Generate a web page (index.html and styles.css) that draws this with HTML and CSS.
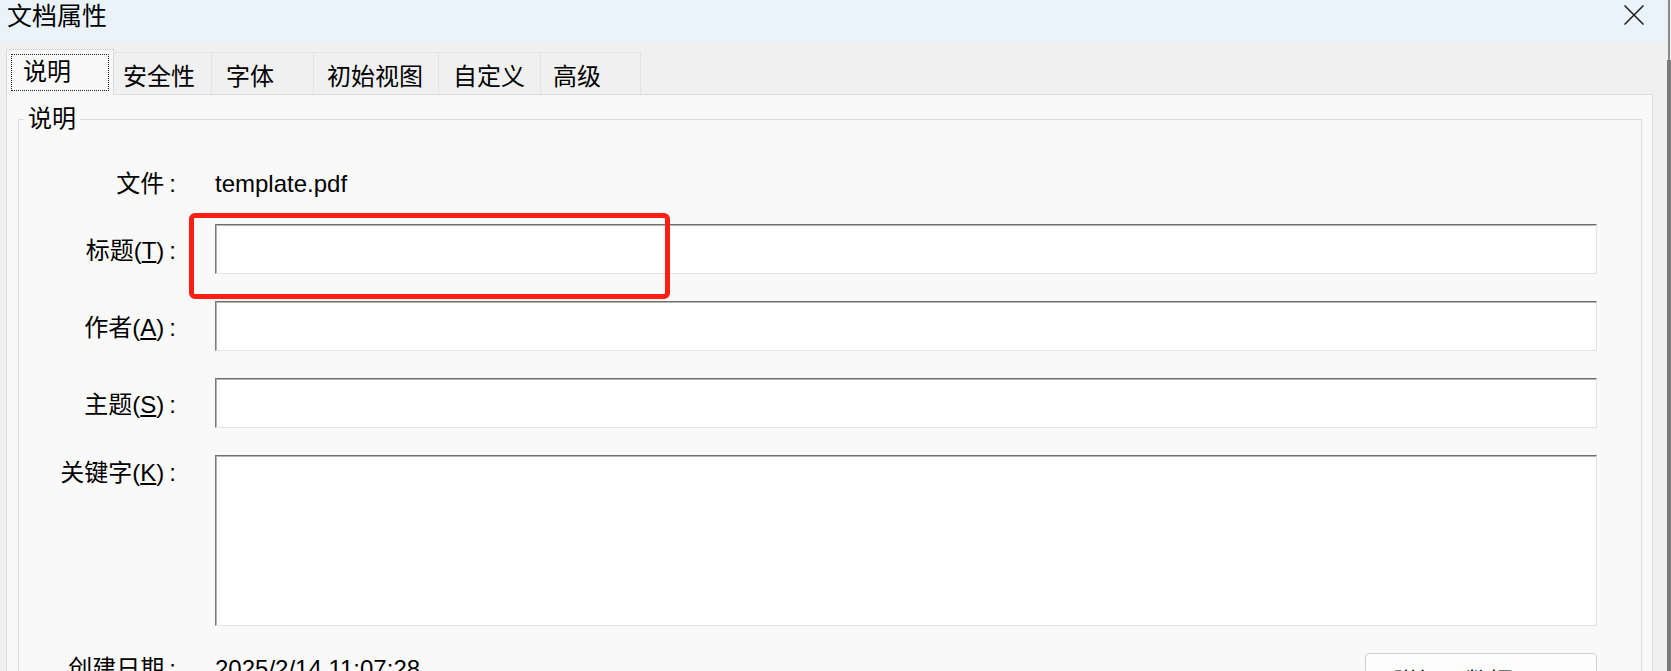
FILE: index.html
```html
<!DOCTYPE html>
<html lang="zh-CN">
<head>
<meta charset="utf-8">
<title>文档属性</title>
<link rel="stylesheet" href="styles.css">
</head>
<body>
<div class="screen">
  <div class="window">
    <div class="titlebar">
      <span class="title">文档属性</span>
      <span class="close" aria-label="关闭">
        <svg width="20" height="20" viewBox="0 0 20 20"><path d="M0.5 0.5 L19.5 19.5 M19.5 0.5 L0.5 19.5" stroke="#1b1b1b" stroke-width="1.5" fill="none"/></svg>
      </span>
    </div>
    <div class="tabbar">
      <div class="tab active"><span class="focus">说明</span></div>
      <div class="tab t-sec">安全性</div>
      <div class="tab t-font">字体</div>
      <div class="tab t-view">初始视图</div>
      <div class="tab t-custom">自定义</div>
      <div class="tab t-adv">高级</div>
    </div>
    <div class="panel">
      <fieldset class="group">
        <legend>说明</legend>
        <div class="form">
          <div class="lbl lbl-text">文件<span class="c">:</span></div>
          <div class="val">template.pdf</div>

          <div class="lbl">标题(<u>T</u>)<span class="c">:</span></div>
          <div class="input"></div>

          <div class="lbl">作者(<u>A</u>)<span class="c">:</span></div>
          <div class="input"></div>

          <div class="lbl">主题(<u>S</u>)<span class="c">:</span></div>
          <div class="input"></div>

          <div class="lbl lbl-top">关键字(<u>K</u>)<span class="c">:</span></div>
          <div class="input area"></div>

          <div class="lbl lbl-date">创建日期<span class="c">:</span></div>
          <div class="daterow">
            <span class="date">2025/2/14 11:07:28</span>
            <button class="btn">附加元数据(<u>M</u>)...</button>
          </div>
        </div>
      </fieldset>
    </div>
    <div class="highlight"></div>
  </div>
  <div class="edge"></div>
</div>
</body>
</html>
```
FILE: styles.css
```css
* { box-sizing: border-box; }
html, body { margin: 0; padding: 0; }
body {
  width: 1671px;
  height: 671px;
  overflow: hidden;
  background: #f0f0f0;
  font-family: "Liberation Sans", "Noto Sans CJK SC", sans-serif;
  font-size: 24px;
  line-height: 24px;
  color: #000;
}
.screen { display: flex; height: 671px; }
.window {
  position: relative;
  width: 1667px;
  height: 671px;
  overflow: hidden;
  background: #f0f0f0;
  display: flex;
  flex-direction: column;
  flex: none;
}
.edge {
  flex: 1;
  background:
    linear-gradient(90deg, #f0f0f0 0 1px, #8a8a8a 1px 3px, #f0f0f0 3px) top / 100% 60px no-repeat,
    #7b7b7b;
}

/* title bar */
.titlebar {
  height: 43px;
  flex: none;
  background: #ebf3fa;
  display: flex;
  align-items: flex-start;
  justify-content: space-between;
  padding: 4px 23px 0 7px;
}
.title { line-height: 24px; font-size: 25px; }
.close { display: block; width: 20px; height: 20px; margin-top: 1px; }
.close svg { display: block; }

/* tabs */
.tabbar {
  height: 51px;
  flex: none;
  display: flex;
  align-items: flex-end;
  padding-left: 8px;
}
.tab {
  height: 42px;
  padding-top: 12px;
  background: #f0f0f0;
  border-top: 1px solid #e3e3e3;
  border-right: 1px solid #e3e3e3;
  white-space: nowrap;
}
.tab.active {
  position: relative;
  z-index: 1;
  height: 46px;
  width: 108px;
  margin-left: -2px;
  margin-bottom: -1px;
  padding: 4px 4px 0 4px;
  background: #f9f9f9;
  border: 1px solid #d9d9d9;
  border-bottom: none;
}
.focus {
  display: block;
  height: 37px;
  padding: 5px 0 0 11px;
  border: 1px dotted #222;
}
.t-sec { width: 98px; padding-left: 9px; }
.t-font { width: 102px; padding-left: 14px; }
.t-view { width: 125px; padding-left: 13px; }
.t-custom { width: 102px; padding-left: 14px; }
.t-adv { width: 100px; padding-left: 12px; }

/* panel */
.panel {
  flex: 1;
  margin: 0 14px 0 6px;
  background: #f9f9f9;
  border: 1px solid #dcdcdc;
}
.group {
  margin: 12px 10px 0 11px;
  padding: 0 44px 40px 0;
  border: 1px solid #dcdcdc;
  min-width: 0;
}
.group legend {
  margin-left: 5px;
  padding: 0 4px;
  line-height: 24px;
}

.form {
  display: grid;
  grid-template-columns: 157px 1fr;
  column-gap: 39px;
  row-gap: 27px;
  padding-top: 37px;
}
.lbl {
  text-align: right;
  white-space: nowrap;
  align-self: center;
  margin-top: 4px;
}
.lbl u, .btn u { text-underline-offset: 2px; }
.c { margin-left: 5px; }
.lbl-text { align-self: start; margin-top: 0; padding-top: 4px; height: 29px; }
.lbl-top { align-self: start; margin-top: 0; padding-top: 6px; }
.lbl-date { align-self: start; margin-top: 0; padding-top: 4px; }
.val { padding-top: 4px; height: 29px; }

.input {
  height: 50px;
  background: #fff;
  border: 1px solid;
  border-color: #6f6f6f #e3e3e3 #e3e3e3 #7a7a7a;
  box-shadow: inset 1px 1px 0 #b4b4b4;
}
.input.area { height: 171px; }

.daterow {
  display: flex;
  justify-content: space-between;
  align-items: flex-start;
}
.date { padding-top: 4px; }
.btn {
  margin-top: 0;
  width: 232px;
  height: 46px;
  padding: 11px 0 0;
  font: inherit;
  line-height: 24px;
  color: #000;
  text-align: center;
  background: #fdfdfd;
  border: 1px solid #d0d0d0;
  border-radius: 4px;
}

/* annotation */
.highlight {
  position: absolute;
  left: 189px;
  top: 213px;
  width: 481px;
  height: 86px;
  border: 5px solid #fe1f14;
  border-radius: 6px;
}
```
